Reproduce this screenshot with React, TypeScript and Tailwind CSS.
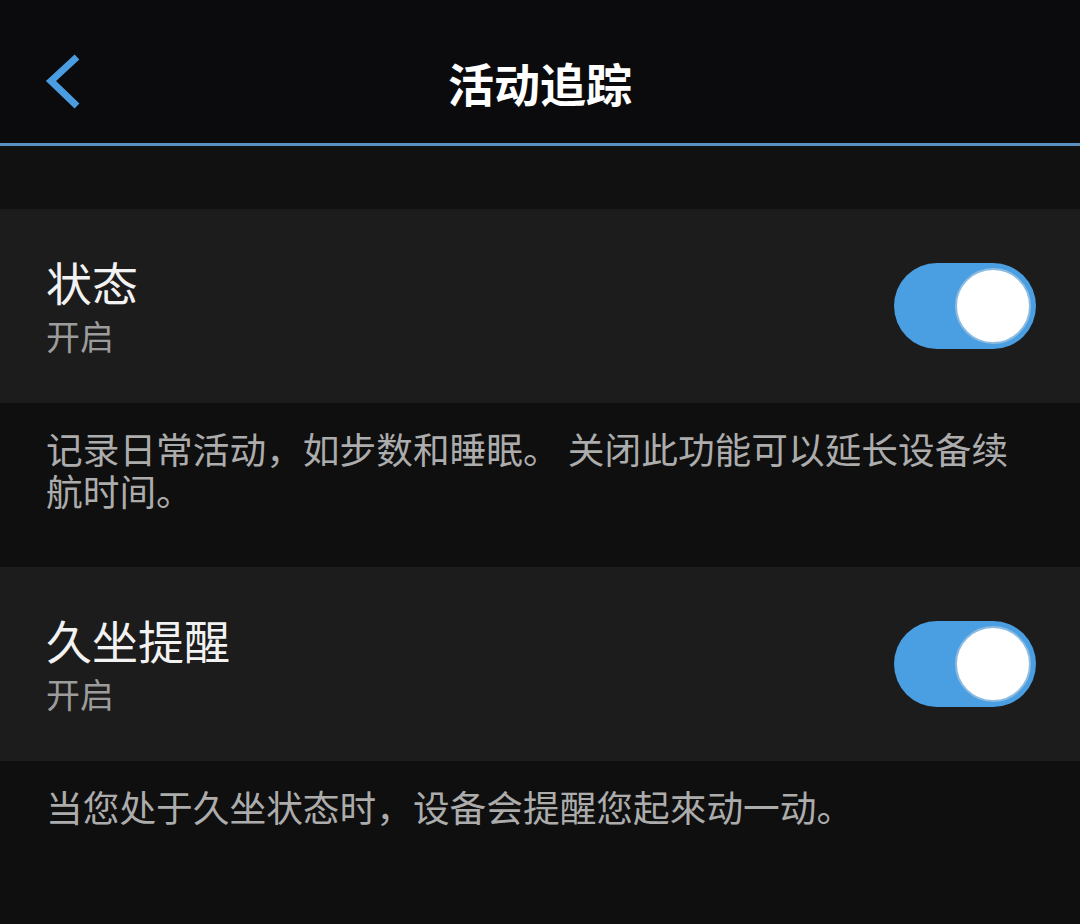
const font = { fontFamily: '"Noto Sans CJK SC", "Noto Sans", sans-serif' }

const Toggle = () => (
  <div className="flex items-center w-[142px] h-[86px] rounded-full bg-[#4a9fe2] px-[5px] justify-end">
    <div className="w-[76px] h-[76px] rounded-full bg-white border-2 border-[#8dbbe0]" />
  </div>
)

type RowProps = { title: string; value: string }

const SettingRow = ({ title, value }: RowProps) => (
  <div className="flex items-center justify-between h-[194px] bg-[#1c1c1c] pl-[46px] pr-[44px]">
    <div className="flex flex-col pt-[4px]">
      <span className="text-[46px] leading-[56px] text-[#f2f2f2]">{title}</span>
      <span className="text-[34px] leading-[54px] text-[#9c9c9c]">{value}</span>
    </div>
    <Toggle />
  </div>
)

const Note = ({ text }: { text: string }) => (
  <div className="h-[164px] bg-[#0f0f0f] pl-[46px] pr-[60px] pt-[24px]">
    <p className="text-[36.7px] leading-[42px] text-[#acacac]">{text}</p>
  </div>
)

export default function App() {
  return (
    <div className="w-[1080px] h-[924px] bg-[#0f0f0f] overflow-hidden" style={font}>
      {/* Header */}
      <div className="relative flex items-center justify-center h-[143px] pt-[21px] bg-[#0b0b0d]">
        <svg
          className="absolute left-[44px] top-[53px]"
          width="40"
          height="58"
          viewBox="0 0 40 58"
          fill="none"
        >
          <path
            d="M33 4 L7 28 L33 53"
            stroke="#4a9de0"
            strokeWidth="7"
            strokeLinecap="butt"
            strokeLinejoin="miter"
          />
        </svg>
        <h1 className="text-[46px] font-bold text-white leading-none">活动追踪</h1>
      </div>
      <div className="h-[3px] bg-[#5b8fc2]" />
      <div className="h-[63px] bg-[#111111]" />

      <SettingRow title="状态" value="开启" />
      <Note text="记录日常活动，如步数和睡眠。 关闭此功能可以延长设备续航时间。" />

      <SettingRow title="久坐提醒" value="开启" />
      <Note text="当您处于久坐状态时，设备会提醒您起來动一动。" />
    </div>
  )
}
